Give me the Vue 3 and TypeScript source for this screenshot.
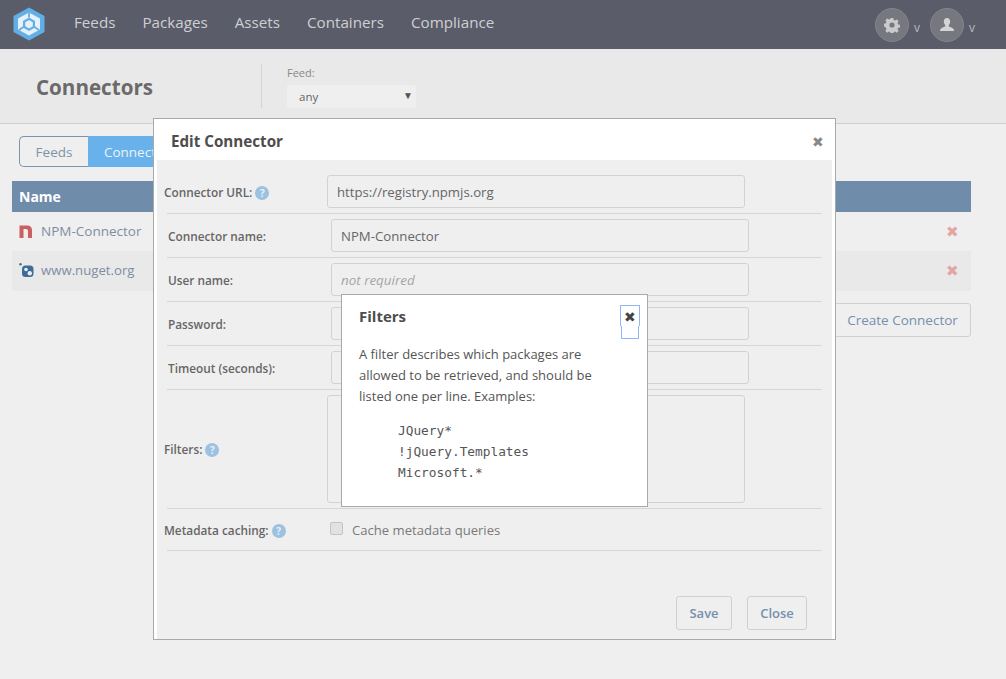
<script setup lang="ts">
type Connector = { name: string; icon: 'npm' | 'nuget' };
type Field = { label: string; value?: string; placeholder?: string; help?: boolean };

const navItems: string[] = ['Feeds', 'Packages', 'Assets', 'Containers', 'Compliance'];

const connectors: Connector[] = [
  { name: 'NPM-Connector', icon: 'npm' },
  { name: 'www.nuget.org', icon: 'nuget' },
];

const fields: Field[] = [
  { label: 'Connector URL:', value: 'https://registry.npmjs.org', help: true },
  { label: 'Connector name:', value: 'NPM-Connector' },
  { label: 'User name:', placeholder: 'not required' },
  { label: 'Password:' },
  { label: 'Timeout (seconds):' },
];

const examples: string[] = ['JQuery*', '!jQuery.Templates', 'Microsoft.*'];
</script>

<template>
  <div class="page">
    <header class="navbar">
      <svg class="logo" width="32" height="34" viewBox="0 0 32 34">
        <path d="M16 0.5 L31.5 9 V25 L16 33.5 L0.5 25 V9 Z" fill="#62aee6" />
        <path d="M16 5.500 L27 11.500 V22.500 L16 28.500 L5 22.500 V11.500 Z" fill="#e6f1fa" />
        <path d="M16 10.500 L22 14 V20.500 L16 24 L10 20.500 V14 Z" fill="#62aee6" />
        <path d="M16 13 L19.800 15.200 V19.300 L16 21.500 L12.200 19.300 V15.200 Z" fill="#e6f1fa" />
        <path d="M16 5.500 V10.500 M6 23 L10.500 20 M26 23 L21.500 20" stroke="#62aee6" stroke-width="1.800" />
      </svg>
      <nav class="nav-links">
        <a v-for="item in navItems" :key="item">{{ item }}</a>
      </nav>
      <div class="nav-actions">
        <span class="round-btn">
          <svg width="16" height="16" viewBox="0 0 16 16">
            <path
              fill="#c9cacd"
              fill-rule="evenodd"
              d="M6.7 1h2.6l.4 2 1.3.6 1.8-1.1 1.8 1.8-1.1 1.8.6 1.3 1.9.4v2.6l-1.9.4-.6 1.3 1.1 1.8-1.8 1.8-1.8-1.1-1.3.6-.4 1.9H6.7l-.4-1.9-1.3-.6-1.8 1.1-1.8-1.8 1.1-1.8-.6-1.3L0 9.3V6.7l1.9-.4.6-1.3-1.1-1.8 1.8-1.8L5 2.5l1.3-.5zM8 5.4a2.6 2.6 0 1 0 0 5.2 2.6 2.6 0 0 0 0-5.2z"
            />
          </svg>
        </span>
        <span class="caret">v</span>
        <span class="round-btn user">
          <svg width="16" height="16" viewBox="0 0 16 16">
            <path
              fill="#d3d4d6"
              d="M8 1c2 0 3.2 1.500 3.200 3.600 0 1.500-.6 2.800-1.400 3.500v1.300c1.800.6 4.700 1.300 5.200 3.600v.9H1v-.9c.5-2.300 3.400-3 5.200-3.600V8.100C5.400 7.400 4.800 6.100 4.800 4.600 4.800 2.500 6 1 8 1z"
            />
          </svg>
        </span>
        <span class="caret">v</span>
      </div>
    </header>

    <section class="subheader">
      <h1>Connectors</h1>
      <div class="feed-filter">
        <label>Feed:</label>
        <div class="fake-select">
          <span>any</span>
          <span class="arrow">▼</span>
        </div>
      </div>
    </section>

    <main class="content">
      <div class="tabs">
        <a class="tab">Feeds</a>
        <a class="tab active">Connectors</a>
      </div>
      <table class="grid">
        <thead>
          <tr>
            <th>Name</th>
            <th></th>
          </tr>
        </thead>
        <tbody>
          <tr v-for="c in connectors" :key="c.name">
            <td>
              <span class="conn-name">
                <svg v-if="c.icon === 'npm'" class="conn-icon" width="14" height="16" viewBox="0 0 14 16">
                  <path d="M0.500 2.500 H8 Q13 2.500 13 7.500 V15 H9 V8 Q9 6 7 6 H4.500 V15 H0.500 Z" fill="#cb5f61" />
                </svg>
                <svg v-else class="conn-icon" width="15" height="16" viewBox="0 0 15 16">
                  <circle cx="1.500" cy="2.200" r="1.200" fill="#3f6c96" />
                  <rect x="3" y="3.500" width="11.500" height="11.500" rx="3.500" fill="#3f6c96" />
                  <circle cx="7" cy="7.500" r="1.800" fill="#e8eef3" />
                  <circle cx="10.800" cy="11.200" r="2.200" fill="#e8eef3" />
                </svg>
                <span :class="c.icon">{{ c.name }}</span>
              </span>
            </td>
            <td class="del-cell"><span class="del">✖</span></td>
          </tr>
        </tbody>
      </table>
      <div class="grid-actions">
        <a class="btn create">Create Connector</a>
      </div>
    </main>

    <div class="modal">
      <div class="modal-head">
        <h2>Edit Connector</h2>
        <span class="modal-x">✖</span>
      </div>
      <div class="modal-body">
        <div v-for="f in fields" :key="f.label" class="row">
          <div class="row-inner" :class="{ shifted: f.help }">
            <label class="lbl">
              {{ f.label }}
              <span v-if="f.help" class="help">?</span>
            </label>
            <div class="input" :class="{ ph: f.placeholder }">{{ f.value || f.placeholder }}</div>
          </div>
        </div>
        <div class="row">
          <div class="row-inner shifted">
            <label class="lbl flat">Filters: <span class="help">?</span></label>
            <div class="input area"></div>
          </div>
        </div>
        <div class="row meta">
          <div class="row-inner shifted">
            <label class="lbl flat">Metadata caching: <span class="help">?</span></label>
            <span class="check"></span>
            <span class="check-label">Cache metadata queries</span>
          </div>
        </div>
        <div class="modal-foot">
          <a class="btn save">Save</a>
          <a class="btn close">Close</a>
        </div>
      </div>
    </div>

    <div class="popover">
      <h3>Filters</h3>
      <span class="pop-x">✖</span>
      <p>A filter describes which packages are allowed to be retrieved, and should be listed one per line. Examples:</p>
      <pre>{{ examples.join('\n') }}</pre>
    </div>
  </div>
</template>

<style>
html,
body {
  margin: 0;
  background: #efefef;
}
</style>

<style scoped>
.page {
  position: relative;
  width: 1006px;
  height: 679px;
  overflow: hidden;
  background: #efefef;
  font-family: 'Open Sans', 'Liberation Sans', sans-serif;
  font-size: 14px;
  color: #666;
}

.navbar {
  display: flex;
  align-items: center;
  height: 49px;
  padding-left: 13px;
  box-sizing: border-box;
  background: #5a5c69;
}

.logo {
  margin-top: -1px;
}

.nav-links {
  display: flex;
  gap: 27px;
  margin-left: 29px;
  margin-top: -5px;
  font-size: 15.200px;
  color: #cfcfd3;
}

.nav-actions {
  display: flex;
  align-items: center;
  margin-left: auto;
  margin-right: 31px;
}

.round-btn {
  display: flex;
  align-items: center;
  justify-content: center;
  width: 34px;
  height: 34px;
  box-sizing: border-box;
  border: 1px solid #83848c;
  border-radius: 50%;
  background: #77787f;
}

.caret {
  margin: 5px 10px 0 5px;
  font-size: 12px;
  color: #b9bac0;
}

.caret:last-child {
  margin-right: 0;
}

.subheader {
  display: flex;
  height: 75px;
  box-sizing: border-box;
  background: #e9e9e9;
  border-bottom: 1px solid #cfcfcf;
}

.subheader h1 {
  width: 225px;
  margin: 23px 0 0 36px;
  font-size: 20.600px;
  line-height: 30px;
  font-weight: 700;
  color: #6a6a6a;
}

.feed-filter {
  height: 44px;
  margin-top: 15px;
  padding: 0 0 0 25px;
  border-left: 1px solid #d4d4d4;
}

.feed-filter label {
  display: block;
  height: 21px;
  font-size: 11px;
  line-height: 17px;
  color: #888;
}

.fake-select {
  display: flex;
  justify-content: space-between;
  align-items: center;
  width: 129px;
  height: 23px;
  box-sizing: border-box;
  padding: 0 3px 0 12px;
  border-radius: 2px;
  background: #efefef;
  font-size: 11.500px;
  color: #666;
}

.arrow {
  font-size: 10px;
  color: #555;
  margin-bottom: 3px;
}

.content {
  padding: 12px 35px 0 12px;
}

.tabs {
  display: flex;
  height: 31px;
  margin-left: 7px;
}

.tab {
  display: flex;
  align-items: center;
  justify-content: center;
  box-sizing: border-box;
  width: 69px;
  border: 1px solid #7a95b0;
  border-right: none;
  border-radius: 5px 0 0 5px;
  font-size: 13.500px;
  color: #7f93a8;
}

.tab.active {
  width: 104px;
  border: none;
  border-radius: 0;
  background: #68b1ea;
  color: #eaf4fc;
}

.grid {
  width: 959px;
  margin-top: 14px;
  border-collapse: collapse;
  table-layout: fixed;
}

.grid th {
  height: 31px;
  padding: 0 0 0 7px;
  background: #6f8cab;
  color: #fff;
  font-size: 14px;
  font-weight: 700;
  text-align: left;
}

.grid td {
  height: 39px;
  padding: 0 0 2px 7px;
  box-sizing: border-box;
  font-size: 13.500px;
  color: #7f8da3;
}

.grid tbody tr:nth-child(2) td {
  height: 40px;
  background: #e9e9e9;
}

.conn-name {
  display: flex;
  align-items: center;
  gap: 8px;
}

.conn-name .nuget {
  font-size: 13.200px;
  margin-left: -1px;
}

.conn-icon {
  flex: none;
}

.grid td.del-cell {
  padding-left: 1px;
  text-align: center;
}

.grid th:last-child {
  width: 38px;
  padding: 0;
}

.del {
  font-size: 15px;
  color: #e3a4a4;
}

.grid-actions {
  display: flex;
  justify-content: flex-end;
  margin-top: 12px;
}

.btn {
  display: flex;
  align-items: center;
  justify-content: center;
  box-sizing: border-box;
  height: 34px;
  border: 1px solid #cfcfcf;
  border-radius: 3px;
  background: #efefef;
  font-size: 13px;
  font-weight: 600;
  color: #7590ad;
}

.btn.create {
  width: 137px;
  font-weight: 400;
  font-size: 13.500px;
}

.btn.save {
  width: 56px;
}

.btn.close {
  width: 60px;
}

.modal {
  position: absolute;
  left: 153px;
  top: 118px;
  width: 683px;
  height: 522px;
  box-sizing: border-box;
  border: 1px solid #a9a9a9;
  background: #fff;
}

.modal-head {
  display: flex;
  align-items: center;
  justify-content: space-between;
  height: 41px;
  padding: 3px 11px 0 17px;
  box-sizing: border-box;
}

.modal-head h2 {
  margin: 0;
  font-size: 15.200px;
  font-weight: 700;
  color: #4d4d4d;
}

.modal-x {
  font-size: 14px;
  color: #888;
}

.modal-body {
  height: 479px;
  margin: 0 3px 0 3px;
  padding: 15px 10px 0 10px;
  box-sizing: border-box;
  background: #efefef;
}

.row {
  padding-bottom: 5px;
  margin-bottom: 5px;
  border-bottom: 1px solid #d6d6d6;
}

.row-inner {
  display: flex;
  align-items: center;
}

.row-inner.shifted {
  margin-left: -4px;
}

.lbl {
  width: 164px;
  flex: none;
  box-sizing: border-box;
  padding: 1px 0 0 1px;
  font-size: 11.800px;
  font-weight: 600;
  color: #666;
}

.lbl.flat {
  padding-top: 0;
}

.help {
  display: inline-block;
  width: 14px;
  height: 14px;
  margin-left: 0;
  border-radius: 50%;
  background: #9dc1e0;
  color: #e8f0f7;
  font-size: 10px;
  font-weight: 700;
  line-height: 14px;
  text-align: center;
  vertical-align: 0;
}

.input {
  width: 418px;
  height: 33px;
  box-sizing: border-box;
  padding: 0 9px;
  border: 1px solid #d2d2d2;
  border-radius: 3px;
  background: #efefef;
  font-size: 13.200px;
  line-height: 33px;
  color: #666;
}

.input.ph {
  font-style: italic;
  font-size: 13.400px;
  color: #a5a5a5;
}

.input.area {
  height: 108px;
}

.row.meta {
  height: 42px;
  box-sizing: border-box;
  padding: 0;
  margin-top: -5px;
}

.row.meta .row-inner {
  height: 41px;
}

.check {
  width: 13px;
  height: 13px;
  margin-left: 3px;
  margin-top: -3px;
  box-sizing: border-box;
  border: 1px solid #c4c4c4;
  border-radius: 2px;
  background: #e2e2e2;
}

.check-label {
  margin-left: 9px;
  font-size: 13.100px;
  color: #7a7a7a;
}

.modal-foot {
  display: flex;
  justify-content: flex-end;
  gap: 15px;
  margin-top: 45px;
  padding-right: 15px;
}

.popover {
  position: absolute;
  left: 341px;
  top: 294px;
  width: 307px;
  height: 213px;
  box-sizing: border-box;
  padding: 11px 30px 0 17px;
  border: 1px solid #a9a9a9;
  background: #fff;
  color: #555;
}

.popover h3 {
  margin: 0 0 18px;
  font-size: 15px;
  line-height: 20px;
  font-weight: 700;
  color: #4d4d4d;
}

.pop-x {
  position: absolute;
  left: 278px;
  top: 10px;
  width: 20px;
  height: 21px;
  box-sizing: border-box;
  border: 1px solid #8fb6f5;
  border-bottom: none;
  border-radius: 1px 1px 0 0;
  font-size: 14px;
  line-height: 21px;
  text-align: center;
  color: #444;
}

.pop-x::after {
  content: '';
  position: absolute;
  left: 0;
  top: 20px;
  width: 18px;
  height: 13px;
  box-sizing: border-box;
  border: 1px solid #8fb6f5;
  border-top: none;
}

.popover p {
  margin: 0 0 13px;
  font-size: 13px;
  line-height: 21px;
}

.popover pre {
  margin: 0 0 0 39px;
  font-family: 'DejaVu Sans Mono', 'Liberation Mono', monospace;
  font-size: 12.800px;
  line-height: 21px;
  color: #555;
}
</style>
